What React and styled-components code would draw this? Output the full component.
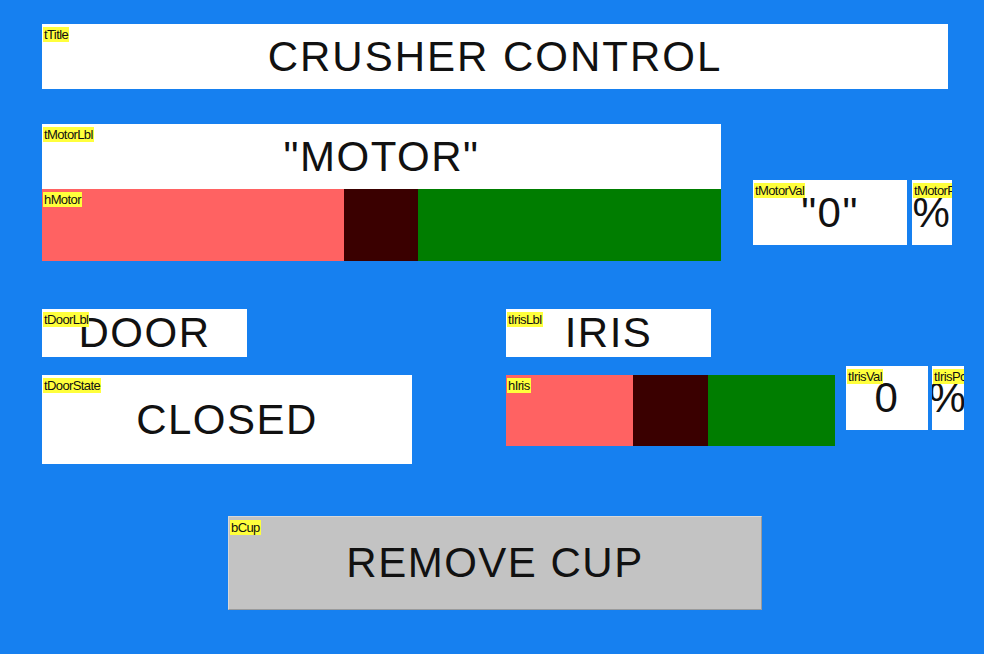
import React from "react";
import styled, { createGlobalStyle } from "styled-components";

const Global = createGlobalStyle`
  html, body {
    margin: 0;
    padding: 0;
    background: #1680f0;
  }
  * {
    box-sizing: border-box;
  }
`;

const Canvas = styled.div`
  width: 984px;
  height: 654px;
  background: #1680f0;
  padding: 24px 0 0 42px;
  display: flex;
  flex-direction: column;
  align-items: flex-start;
  font-family: "Liberation Sans", Arial, sans-serif;
  overflow: hidden;
`;

const Widget = styled.div`
  position: relative;
  width: ${(p) => p.$w}px;
  height: ${(p) => p.$h}px;
  background: ${(p) => p.$bg || "#ffffff"};
  display: flex;
  align-items: center;
  justify-content: center;
  overflow: hidden;
  flex-shrink: 0;
`;

const Text = styled.span`
  font-size: 42px;
  letter-spacing: ${(p) => p.$spacing ?? 1.5}px;
  color: #111;
  white-space: nowrap;
  line-height: 1;
`;

const Tag = styled.span`
  position: absolute;
  top: 3px;
  left: 1px;
  background: #ffff3c;
  color: #111;
  font-size: 13px;
  letter-spacing: -0.6px;
  line-height: 15px;
  padding: 0 1px;
  z-index: 2;
  white-space: nowrap;
`;

const Row = styled.div`
  display: flex;
  align-items: flex-start;
  margin-top: ${(p) => p.$top}px;
  margin-left: ${(p) => p.$left || 0}px;
`;

const Column = styled.div`
  display: flex;
  flex-direction: column;
  gap: ${(p) => p.$gap || 0}px;
  margin-left: ${(p) => p.$left || 0}px;
  margin-top: ${(p) => p.$top || 0}px;
`;

const Readout = styled.div`
  display: flex;
  gap: ${(p) => p.$gap}px;
  margin-left: ${(p) => p.$left}px;
  margin-top: ${(p) => p.$top}px;
`;

const Bar = styled.div`
  position: relative;
  display: flex;
  width: ${(p) => p.$w}px;
  height: ${(p) => p.$h}px;
`;

const Segment = styled.div`
  height: 100%;
  background: ${(p) => p.$color};
`;

const Button = styled.button`
  position: relative;
  width: 534px;
  height: 94px;
  margin-top: 52px;
  margin-left: 186px;
  background: #c3c3c3;
  border: 1px solid #9a9a9a;
  border-top-color: #d8d8d8;
  border-left-color: #d8d8d8;
  font-family: inherit;
  display: flex;
  align-items: center;
  justify-content: center;
  padding: 0;
`;

const Hbar = ({ tag, w, h, low, mid }) => (
  <Bar $w={w} $h={h}>
    <Tag>{tag}</Tag>
    <Segment $color="#ff6262" style={{ width: low }} />
    <Segment $color="#3a0000" style={{ width: mid }} />
    <Segment $color="#007d00" style={{ flex: 1 }} />
  </Bar>
);

const App = () => {
  return (
    <Canvas>
      <Global />
      <Widget $w={906} $h={65}>
        <Tag>tTitle</Tag>
        <Text $spacing={2}>CRUSHER CONTROL</Text>
      </Widget>

      <Row $top={35}>
        <Column>
          <Widget $w={679} $h={65}>
            <Tag>tMotorLbl</Tag>
            <Text>"MOTOR"</Text>
          </Widget>
          <Hbar tag="hMotor" w={679} h={72} low={302} mid={74} />
        </Column>
        <Readout $gap={5} $left={32} $top={56}>
          <Widget $w={154} $h={65}>
            <Tag>tMotorVal</Tag>
            <Text>"0"</Text>
          </Widget>
          <Widget $w={40} $h={65}>
            <Tag>tMotorPct</Tag>
            <Text>%</Text>
          </Widget>
        </Readout>
      </Row>

      <Row $top={48}>
        <Column $gap={18}>
          <Widget $w={205} $h={48}>
            <Tag>tDoorLbl</Tag>
            <Text>DOOR</Text>
          </Widget>
          <Widget $w={370} $h={89}>
            <Tag>tDoorState</Tag>
            <Text>CLOSED</Text>
          </Widget>
        </Column>
        <Column $gap={18} $left={94}>
          <Widget $w={205} $h={48}>
            <Tag>tIrisLbl</Tag>
            <Text>IRIS</Text>
          </Widget>
          <Hbar tag="hIris" w={329} h={71} low={127} mid={75} />
        </Column>
        <Readout $gap={4} $left={11} $top={57}>
          <Widget $w={82} $h={64}>
            <Tag>tIrisVal</Tag>
            <Text>0</Text>
          </Widget>
          <Widget $w={32} $h={64}>
            <Tag>tIrisPct</Tag>
            <Text>%</Text>
          </Widget>
        </Readout>
      </Row>

      <Button>
        <Tag>bCup</Tag>
        <Text>REMOVE CUP</Text>
      </Button>
    </Canvas>
  );
};

export default App;
